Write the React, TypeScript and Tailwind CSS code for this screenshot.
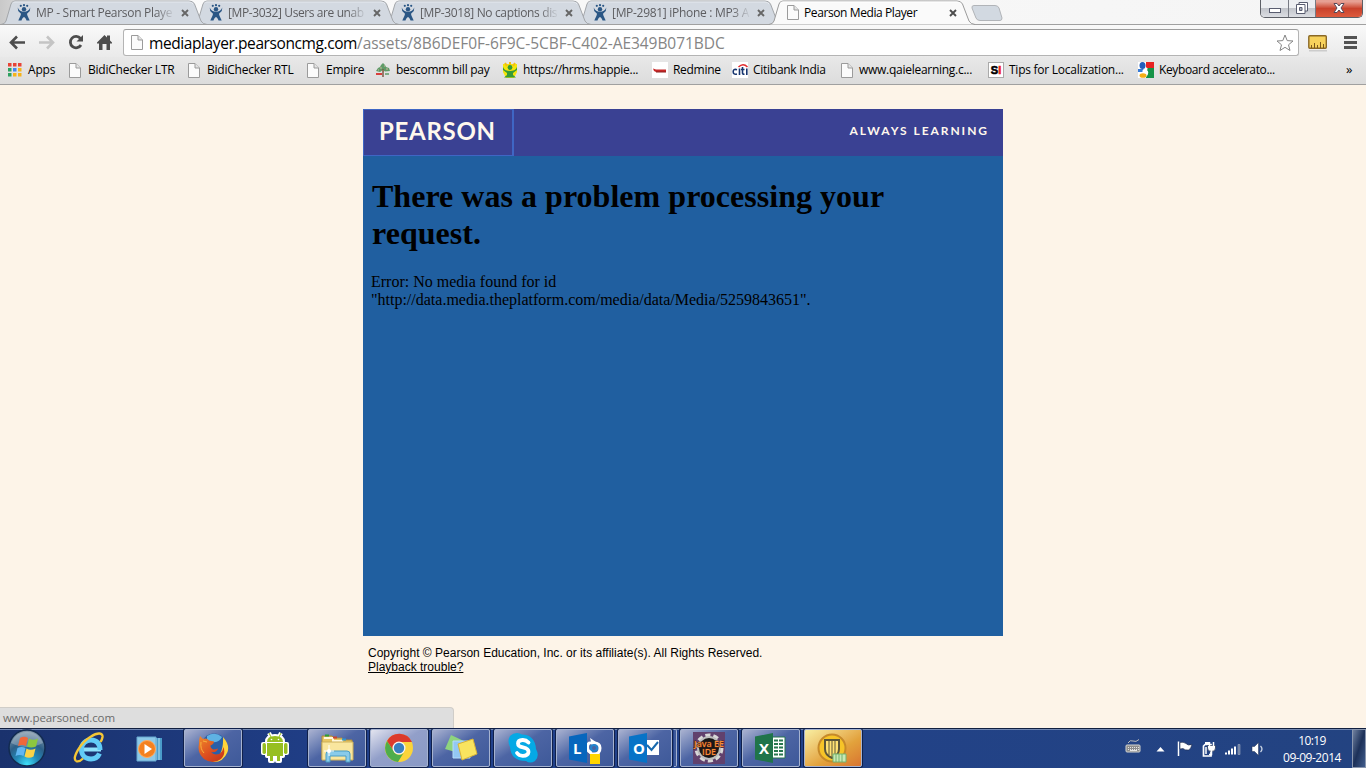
import React from "react";

const ui = "font-['Open_Sans','Noto_Sans',sans-serif]";

function PageIcon({ className = "" }: { className?: string }) {
  return (
    <svg viewBox="0 0 12 15" className={`h-[15px] w-[12px] shrink-0 ${className}`}>
      <path d="M.5.5H7L11.500 5V14.500H.5Z" fill="#fbfbfb" stroke="#9b9b9b" />
      <path d="M7 .5V5H11.500" fill="#e4e4e4" stroke="#9b9b9b" />
    </svg>
  );
}

function JiraIcon() {
  return (
    <svg viewBox="0 0 14 17" className="h-[17px] w-[14px] shrink-0">
      <g fill="#2b5785">
        <circle cx="3.800" cy="1.800" r="1.100" />
        <circle cx="10.200" cy="1.800" r="1.100" />
        <circle cx="7" cy="1.200" r="1.100" />
        <circle cx="7" cy="5.200" r="2.200" />
        <path d="M.7 3.500C2 6.500 4 7.500 7 7.800C10 7.500 12 6.500 13.300 3.500L12.800 7L10 9.800C10.200 12 11.500 13.500 12.700 16.500H9.500C9 14.500 8 13.500 7 13C6 13.500 5 14.500 4.500 16.500H1.300C2.500 13.500 3.800 12 4 9.800L1.200 7Z" />
      </g>
    </svg>
  );
}

function CloseX({ dark }: { dark?: boolean }) {
  return (
    <svg viewBox="0 0 8 8" className="h-[8px] w-[8px] shrink-0">
      <path d="M1 1L7 7M7 1L1 7" stroke={dark ? "#4d4d4d" : "#666"} strokeWidth="1.900" />
    </svg>
  );
}

function Tab({ label, active, z, textClass }: { label: string; active?: boolean; z: string; textClass: string }) {
  return (
    <div className={`relative h-[25px] w-[192px] shrink-0 ${z}`}>
      <svg viewBox="0 0 208 25" className="absolute left-0 top-0 h-[25px] w-[208px]">
        <path
          d="M1 24.500Q5 24 6 21L11 4Q12 1 15 1H189Q193 1 194.500 4L201 21Q202.500 24 207 24.500"
          fill={active ? "#fafafa" : "#d3d9e1"}
          stroke={active ? "#9b9b9b" : "#a3a6aa"}
        />
        <path d="M12.500 3Q13 2 15 2H189Q192 2 193 4" fill="none" stroke={active ? "#fff" : "#e6eaef"} />
        {!active && <path d="M0 24.500H208" stroke="#a0a0a0" />}
      </svg>
      <div className="relative flex h-[25px] items-center pl-[17px]">
        {active ? <PageIcon className="ml-[2px] mr-[5px]" /> : <div className="mr-[5px] flex"><JiraIcon /></div>}
        <div
          className={`w-[139px] overflow-hidden whitespace-nowrap text-[12px] leading-[20px] ${textClass} ${
            active ? "text-black" : "text-[#5d5d60] [mask-image:linear-gradient(to_right,#000_86%,transparent_100%)]"
          }`}
        >
          {label}
        </div>
        <div className="ml-[6px] flex"><CloseX dark={active} /></div>
      </div>
    </div>
  );
}

function WindowButtons() {
  return (
    <div className="relative z-20 ml-auto mr-[3px] flex h-[18px] overflow-hidden rounded-b-[5px] border border-t-0 border-[#5c5f66]">
      <div className="flex w-[28px] items-center justify-center border-r border-[#777a83] bg-linear-to-b from-[#eceef1] from-45% via-[#c2c5cb] via-50% to-[#dcdee3]">
        <svg viewBox="0 0 12 5" className="mt-[4px] h-[5px] w-[12px]"><rect x=".5" y=".5" width="11" height="4" fill="#fff" stroke="#595d70" /></svg>
      </div>
      <div className="flex w-[27px] items-center justify-center border-r border-[#777a83] bg-linear-to-b from-[#eceef1] from-45% via-[#c2c5cb] via-50% to-[#dcdee3]">
        <svg viewBox="0 0 12 12" className="-mt-[2px] h-[12px] w-[12px]" fill="#fff" stroke="#595d70">
          <path d="M3 .5H11.500V9H3Z" /><path d="M.5 2.500H9V11.500H.5Z" /><path d="M3.500 5.500H6V8.500H3.500Z" fill="#aeb3bf" />
        </svg>
      </div>
      <div className="flex w-[46px] items-center justify-center bg-linear-to-b from-[#e6a093] from-10% via-[#c9422c] via-50% to-[#dd5a3d]">
        <svg viewBox="0 0 12 10" className="-mt-[2px] h-[10px] w-[12px]">
          <path d="M1 .5H4L6 3L8 .5H11L8 5L11 9.500H8L6 7L4 9.500H1L4 5Z" fill="#fff" stroke="#574a5a" />
        </svg>
      </div>
    </div>
  );
}

function Toolbar() {
  return (
    <div className="flex h-[32px] items-center bg-linear-to-b from-[#f9f9f9] to-[#eaeaea]">
      <svg viewBox="0 0 120 32" className="h-[32px] w-[120px] shrink-0" fill="none">
        <path d="M11 17.500H25M17 11.500L11 17.500L17 23.500" stroke="#4d4d4d" strokeWidth="2.600" />
        <path d="M39 17.500H53M47 11.500L53 17.500L47 23.500" stroke="#c4c4c4" strokeWidth="2.600" />
        <path d="M80.500 13.500A5.700 5.700 0 1 0 81 20" stroke="#4d4d4d" strokeWidth="2.800" />
        <path d="M83 10V16.500H76.500Z" fill="#4d4d4d" />
        <path d="M97 17.500L104.500 10L107 12.500V10.500H110V15.500L112 17.500V18.500H110V25H106.500V19H102.500V25H99V18.500H97Z" fill="#4d4d4d" />
      </svg>
      <div className="ml-[3px] mt-[3px] flex h-[27px] w-[1176px] items-center rounded-[3px] border border-[#b4b4b4] border-t-[#9c9c9c] bg-white pl-[7px]">
        <PageIcon />
        <div className="ml-[6px] w-[1133px] whitespace-nowrap text-[15.500px] leading-[22px] tracking-[-0.050px] text-[#858585]">
          <span className="tracking-[-0.410px] text-black">mediaplayer.pearsoncmg.com</span>/assets/8B6DEF0F-6F9C-5CBF-C402-AE349B071BDC
        </div>
        <svg viewBox="0 0 18 18" className="-ml-[6px] h-[18px] w-[18px] shrink-0">
          <path d="M9 1L11.200 6.600L17 7L12.500 10.800L14 16.500L9 13.300L4 16.500L5.500 10.800L1 7L6.800 6.600Z" fill="#fff" stroke="#858585" strokeLinejoin="round" />
        </svg>
      </div>
      <svg viewBox="0 0 66 32" className="ml-[1px] h-[32px] w-[66px] shrink-0">
        <rect x="9" y="25" width="18" height="1.500" fill="#ccc" />
        <rect x="8.800" y="10.800" width="17.500" height="12.500" rx="1" fill="#f7d25c" stroke="#8a6826" strokeWidth="1.400" />
        <path d="M11.500 23V20M14.500 23V18M17.500 23V20M20.500 23V17M23.500 23V19" stroke="#7b591c" />
        <path d="M44 12.500H57M44 17.500H57M44 22.500H57" stroke="#535353" strokeWidth="3" />
      </svg>
    </div>
  );
}

const appColors = ["#e84436", "#e84436", "#e84436", "#2da160", "#4385f0", "#f6b31a", "#2da160", "#f6b31a", "#f6b31a"];

const AppsIcon = () => (
  <svg viewBox="0 0 14 14" className="h-[14px] w-[14px]">
    {appColors.map((c, i) => <rect key={i} x={(i % 3) * 5} y={Math.floor(i / 3) * 5} width="3.500" height="3.500" fill={c} />)}
  </svg>
);
const TreeIcon = () => (
  <svg viewBox="0 0 16 16" className="h-[16px] w-[16px]">
    <path d="M8 1L10 3L11 5L14 6L15 9L10 9.500L8 8L5 10L1 9L3 6L5 5L6 3Z" fill="#5f9b68" />
    <path d="M5 6H7M9 4H10M11 7H13M3 8H4M7 8L9 10" stroke="#d4b39a" />
    <path d="M8 7V15" stroke="#7c5a45" strokeWidth="1.500" /><path d="M1 12H7" stroke="#d8403c" strokeWidth="2" /><path d="M10 12H14" stroke="#5f9b68" strokeWidth="1.500" />
  </svg>
);
const HrmsIcon = () => (
  <svg viewBox="0 0 16 16" className="h-[16px] w-[16px]">
    <path d="M1 2H15V10L12 16H4L1 10Z" fill="#f4e60a" />
    <path d="M8 0V3M3 1L5 4M13 1L11 4" stroke="#f2bf14" strokeWidth="2" />
    <circle cx="8" cy="5.500" r="2.400" fill="#359b38" />
    <path d="M1 5C2 8 5 9 8 9C11 9 14 8 15 5V8L11 11V13L14 15.500H2L5 13V11L1 8Z" fill="#359b38" />
  </svg>
);
const RedmineIcon = () => (
  <svg viewBox="0 0 16 16" className="h-[16px] w-[16px]">
    <path d="M0 0H16V16H0Z" fill="#fff" /><path d="M1 6.500L4 7.500H14V10H4L2 9Z" fill="#c82828" /><path d="M4 10H14" stroke="#8e2020" />
  </svg>
);
const CitiIcon = () => (
  <svg viewBox="0 0 16 16" className="h-[16px] w-[16px]">
    <path d="M0 0H16V16H0Z" fill="#fff" />
    <path d="M6.500 5Q11 .5 15.500 5" fill="none" stroke="#e22a2c" strokeWidth="1.500" />
    <path d="M5 7.700Q1.200 6.500 1.200 9.700T5 12M7.500 6.500V13M10.500 5V11Q10.500 12.300 12.500 12.200M9 7.500H12.500M14.800 6.500V13" fill="none" stroke="#17356f" strokeWidth="1.600" />
  </svg>
);
const SiIcon = () => (
  <div className="flex h-[16px] w-[16px] items-center justify-center border border-[#aaa] bg-white font-['Liberation_Sans',sans-serif] text-[11px] font-bold leading-none text-black [-webkit-text-stroke:0.6px]">
    S<span className="text-[#ef1d1d]">I</span>
  </div>
);
const GoogleIcon = () => (
  <svg viewBox="0 0 16 16" className="h-[16px] w-[16px]">
    <path d="M0 0H16V16H0Z" fill="#fff" /><path d="M8 0H16V6H8Z" fill="#e72323" /><path d="M9 6H16V16H8Z" fill="#159347" /><path d="M0 7H6V10H0Z" fill="#357bd8" />
    <path d="M7 5Q11 6 9 8Q12 11 8 15Q5 17 2 14" fill="#fff" />
    <ellipse cx="4.500" cy="3.500" rx="3" ry="3.500" fill="#225ebd" /><ellipse cx="5" cy="13.500" rx="3.500" ry="2.300" fill="#f5ae14" /><path d="M5 8L8 11" stroke="#fff" strokeWidth="2" />
  </svg>
);

const bookmarks: { label: string; w: string; gap: string; t: string; icon: React.ReactNode }[] = [
  { label: "Apps", w: "w-[61px]", gap: "gap-[6px]", t: "tracking-[-0.200px]", icon: <AppsIcon /> },
  { label: "BidiChecker LTR", w: "w-[119px]", gap: "gap-[7px]", t: "tracking-[-0.230px]", icon: <PageIcon /> },
  { label: "BidiChecker RTL", w: "w-[119px]", gap: "gap-[7px]", t: "tracking-[-0.230px]", icon: <PageIcon /> },
  { label: "Empire", w: "w-[68px]", gap: "gap-[7px]", t: "tracking-[-0.260px]", icon: <PageIcon /> },
  { label: "bescomm bill pay", w: "w-[127px]", gap: "gap-[5px]", t: "tracking-[-0.260px]", icon: <TreeIcon /> },
  { label: "https://hrms.happie...", w: "w-[150px]", gap: "gap-[5px]", t: "tracking-[-0.270px]", icon: <HrmsIcon /> },
  { label: "Redmine", w: "w-[80px]", gap: "gap-[5px]", t: "tracking-[-0.300px]", icon: <RedmineIcon /> },
  { label: "Citibank India", w: "w-[109px]", gap: "gap-[5px]", t: "tracking-[-0.270px]", icon: <CitiIcon /> },
  { label: "www.qaielearning.c...", w: "w-[147px]", gap: "gap-[6px]", t: "tracking-[-0.270px]", icon: <PageIcon /> },
  { label: "Tips for Localization...", w: "w-[150px]", gap: "gap-[5px]", t: "tracking-[-0.250px]", icon: <SiIcon /> },
  { label: "Keyboard accelerato...", w: "w-[208px]", gap: "gap-[5px]", t: "tracking-[-0.370px]", icon: <GoogleIcon /> },
];

const StartIcon = () => (
  <svg viewBox="0 0 38 38" className="h-[38px] w-[38px]">
    <defs>
      <radialGradient id="orb" cx=".5" cy=".95" r=".9"><stop offset="0" stopColor="#3fe0fa" /><stop offset=".35" stopColor="#2389b8" /><stop offset=".65" stopColor="#2c5f88" /><stop offset="1" stopColor="#7c92a5" /></radialGradient>
    </defs>
    <circle cx="19" cy="19" r="18" fill="url(#orb)" stroke="#122b50" strokeWidth="1.500" />
    <path d="M3 14A17 17 0 0 1 35 14Q19 22 3 14" fill="#fff" opacity=".25" />
    <path d="M12 9Q16 6.500 20 9L18 17Q14 15 10 17Z" fill="#f0673a" /><path d="M21 9.500Q25 12 30 9.500L28 17.500Q23 19.500 19 17.500Z" fill="#8dc83f" />
    <path d="M9.500 19Q13.500 17 17.500 19L15.500 27Q11.500 25 7.500 27Z" fill="#61b6f2" /><path d="M18.500 19.500Q22.500 22 27.500 19.500L25.500 27.500Q21 30 16.500 27.500Z" fill="#fbd348" />
  </svg>
);
const IeIcon = () => (
  <svg viewBox="0 0 32 32" className="h-[32px] w-[32px]" fill="none">
    <path d="M10 17.500H28" stroke="#8ee0fb" strokeWidth="4" />
    <path d="M26.500 21.500C24.500 26 21.500 27 18 27C12 27 8.500 23 8.500 17.500C8.500 11.500 13 8 18 8C24 8 27 12 27 18" stroke="#62cbf7" strokeWidth="5" />
    <path d="M3 29C-1 26 7 11 18 4.500C25 0 30 1 29.500 5C29 8 28 9 27.500 10" stroke="#f5c636" strokeWidth="2.400" />
    <path d="M3 29C5 30 8 28.500 10 26.500" stroke="#f5c636" strokeWidth="2.400" />
  </svg>
);
const MediaIcon = () => (
  <svg viewBox="0 0 28 28" className="h-[28px] w-[28px]">
    <path d="M10 3H26V25H10Z" fill="#4a9cca" /><path d="M23 3V25M20 3V25" stroke="#b6e3f6" /><path d="M1 2H20V26H1Z" fill="#8dc9e8" stroke="#68a9d0" />
    <circle cx="11" cy="14" r="8.500" fill="#f48120" stroke="#ffac61" /><path d="M8.500 9L16 14L8.500 19Z" fill="#fff" />
  </svg>
);
const FirefoxIcon = () => (
  <svg viewBox="0 0 32 32" className="h-[32px] w-[32px]">
    <defs><linearGradient id="fox" x1="0" y1="0" x2=".8" y2="1"><stop offset="0" stopColor="#f08a2a" /><stop offset=".6" stopColor="#dc4e20" /><stop offset="1" stopColor="#c5381b" /></linearGradient></defs>
    <circle cx="17" cy="14" r="12.500" fill="#2a5fa8" /><path d="M10 4Q18 -1 25 5Q22 11 16 10L10 8Z" fill="#5fb2e3" />
    <path d="M26 5Q33 13 30.500 20Q26 31 15 30Q27 24 26 5Z" fill="#ffd43a" />
    <path d="M3 4L6 7Q10 5.500 12 8.500L17 9.500Q17 12 13.500 13.500Q13 16 16 17.500Q19 17.500 21 16.500Q20 21 14 20Q17 24 23 21.500Q26 19 26.500 15Q29 22 24 27Q16 33 7 27Q0 21 2 12Q2 7 3 4Z" fill="url(#fox)" />
    <path d="M4 10Q3 17 7 21M6 9L10 10" stroke="#f9b13b" fill="none" />
  </svg>
);
const AndroidIcon = () => (
  <svg viewBox="0 0 30 34" className="h-[34px] w-[30px]">
    <g stroke="#fff" strokeWidth="4" strokeLinejoin="round" fill="#fff">
      <path d="M7 11Q7 5 15 5T23 11ZM7 12H23V25H7ZM3 13H5V22H3ZM25 13H27V22H25ZM10 25H13V30H10ZM17 25H20V30H17ZM9 2L11 6M21 2L19 6" />
    </g>
    <g fill="#97bf20"><path d="M7 11Q7 5 15 5T23 11ZM7 12H23V25H7ZM10 25H13V30H10ZM17 25H20V30H17Z" /><rect x="2.500" y="12" width="3.500" height="11" rx="1.700" /><rect x="24" y="12" width="3.500" height="11" rx="1.700" /></g>
    <path d="M9 2L11 6M21 2L19 6" stroke="#97bf20" /><circle cx="11.500" cy="8.500" r=".8" fill="#fff" /><circle cx="18.500" cy="8.500" r=".8" fill="#fff" />
  </svg>
);
const FolderIcon = () => (
  <svg viewBox="0 0 34 32" className="h-[32px] w-[34px]">
    <path d="M2 4H12L14 6H22L24 8H32V27H2Z" fill="#e8c663" stroke="#a8883c" /><path d="M4 6H13V9H22V11H31" stroke="#fff7db" strokeWidth="2" fill="none" />
    <path d="M5 3.500H9" stroke="#2b9f35" strokeWidth="2" /><path d="M13 5.500H17" stroke="#cf442b" strokeWidth="2" /><path d="M22 7.500H26" stroke="#2d97d3" strokeWidth="2" />
    <path d="M2 10H33V28H2Z" fill="#f9e69e" stroke="#cdb05a" /><path d="M6 30V22Q6 19 9 19H27Q30 19 30 22V30H26V24H10V30Z" fill="#89cbea" stroke="#4a9dc4" />
    <path d="M9 13V24M4 19H14" stroke="#fff" /><circle cx="9" cy="19" r="2" fill="#fff" />
  </svg>
);
const ChromeIcon = () => (
  <svg viewBox="0 0 30 30" className="h-[30px] w-[30px]">
    <circle cx="15" cy="15" r="14" fill="#fbd43a" /><path d="M3 8A14 14 0 0 1 28 9H15A6 6 0 0 0 9.500 18Z" fill="#dc3a2c" /><path d="M3 8A14 14 0 0 0 14 29L20.500 18.500A6 6 0 0 1 9.500 18Z" fill="#4fad4b" />
    <circle cx="15" cy="15" r="6.500" fill="#f5f5f5" /><circle cx="15" cy="15" r="5.200" fill="#397fc0" />
  </svg>
);
const NotesIcon = () => (
  <svg viewBox="0 0 34 30" className="h-[30px] w-[34px]">
    <path d="M7 2L22 9L15 20L1 16Z" fill="#8ed47e" /><path d="M9 8H26V25H9Z" fill="#93c8f4" stroke="#b5ddfa" /><path d="M14 11L29 6L33 21L18 27Z" fill="#f9e45f" stroke="#d9b336" />
  </svg>
);
const SkypeIcon = () => (
  <svg viewBox="0 0 32 32" className="h-[32px] w-[32px]">
    <path d="M10 1Q13 1 15 2.500Q28 3 29 17Q33 24 28 29Q23 32 19 29Q4 29 3 15Q0 9 3 4Q6 1 10 1Z" fill="#05a9e5" />
    <path d="M21.500 10.500Q19 7.800 15.500 8Q11 8.300 11 11.500Q11 14.500 16 15.300Q21.700 16.500 21.500 20Q21 24 15.500 23.800Q12 23.800 10 21" fill="none" stroke="#fff" strokeWidth="3.800" strokeLinecap="round" />
  </svg>
);
const OfficeIcon = ({ letter, color, children }: { letter: string; color: string; children?: React.ReactNode }) => (
  <svg viewBox="0 0 34 32" className="h-[32px] w-[34px]">
    {children}
    <path d="M1 4.500L19 1V31L1 27.500Z" fill={color} />
    <text x="5" y="21.500" fill="#fff" fontFamily="Open Sans" fontSize="15" fontWeight="700">{letter}</text>
  </svg>
);
const JavaIcon = () => (
  <svg viewBox="0 0 32 32" className="h-[32px] w-[32px]">
    <path d="M0 0H32V32H0Z" fill="#61416d" />
    <circle cx="16" cy="16" r="12.500" fill="none" stroke="#d8d8d8" strokeWidth="4" strokeDasharray="5 2.850" />
    <circle cx="16" cy="16" r="11" fill="#181717" stroke="#bdbdbd" strokeWidth="2" />
    <g fill="#f98a35" fontFamily="Open Sans" fontSize="8.500" fontWeight="600" stroke="#4a2418" strokeWidth="1" paintOrder="stroke">
      <text x="1" y="14.500" textLength="30" lengthAdjust="spacingAndGlyphs">Java EE</text>
      <text x="9" y="23" textLength="14" lengthAdjust="spacingAndGlyphs">IDE</text>
    </g>
  </svg>
);
const ShieldIcon = () => (
  <svg viewBox="0 0 32 32" className="h-[32px] w-[32px]">
    <circle cx="15" cy="16" r="13.500" fill="#f7c428" stroke="#c6892a" strokeWidth="2" />
    <path d="M8 8H22V17Q22 23 15 26Q8 23 8 17Z" fill="#ffe273" stroke="#5c5638" strokeWidth="2" /><path d="M12 8V23M15 8V25M18 8V23" stroke="#5c5638" />
    <path d="M16 22H29V30H16Z" fill="#c8e8b5" stroke="#75b26d" /><path d="M19 22V30M22 22V30M25 22V30" stroke="#75b26d" />
  </svg>
);

const framed =
  "mx-px h-[38px] w-[58px] rounded-[2px] border border-[#a6b3d0] bg-linear-to-br shadow-[0_0_0_1px_#10204b] flex items-center justify-center";
const normal = "from-[#aab2d0] via-[#4d65a4] via-45% to-[#3e5999]";

const taskButtons: { icon: React.ReactNode; look: string; stacked?: boolean }[] = [
  { icon: <FirefoxIcon />, look: normal },
  { icon: <AndroidIcon />, look: "" },
  { icon: <FolderIcon />, look: normal },
  { icon: <ChromeIcon />, look: "from-[#e3e4ef] via-[#929fc9] via-45% to-[#8999c5]" },
  { icon: <NotesIcon />, look: normal },
  { icon: <SkypeIcon />, look: normal },
  {
    icon: (
      <OfficeIcon letter="L" color="#0766bd">
        <path d="M18 15Q18 9 23 9.500L22 6L28 10L23.500 14.500V12Q21 12 21 15Q21 19 24 19V22Q18 22 18 15Z" fill="#fff" />
        <path d="M26 11Q32 11 32 16Q32 22 26 22Q22 22 21 18" fill="none" stroke="#fff" strokeWidth="3" /><circle cx="26" cy="16" r="3" fill="none" stroke="#2384ce" strokeWidth="2" />
        <path d="M22 22H32V32H22Z" fill="#ffd500" />
      </OfficeIcon>
    ),
    look: normal,
  },
  {
    icon: (
      <OfficeIcon letter="O" color="#0773c7"><path d="M18 8H31V23H18Z" fill="#fff" /><path d="M19 13L23.500 18L30 10" fill="none" stroke="#1768ad" strokeWidth="2" /></OfficeIcon>
    ),
    look: normal,
    stacked: true,
  },
  { icon: <JavaIcon />, look: normal },
  {
    icon: (
      <OfficeIcon letter="X" color="#20744a"><path d="M18 5H31V26H18Z" fill="#fff" stroke="#26774e" /><path d="M20 8.500H29M20 12H29M20 15.500H29M20 19H29M20 22.500H29" stroke="#26774e" strokeWidth="1.800" /><path d="M24.500 6V25" stroke="#fff" /></OfficeIcon>
    ),
    look: normal,
  },
  { icon: <ShieldIcon />, look: "from-[#f8efa2] via-[#e2a23c] via-60% to-[#d87431]" },
];

function TrayIcons() {
  return (
    <svg viewBox="0 0 151 39" className="h-[39px] w-[151px] shrink-0">
      <rect x="5" y="16" width="14" height="7" rx="1" fill="#8c8c8c" stroke="#d3d3cf" />
      <path d="M7 18.500H18M7 20.500H18" stroke="#e5e5e5" strokeDasharray="1 1" /><path d="M9 21.500H16" stroke="#e5e5e5" />
      <path d="M7 14Q9 10.500 12 12T18 10.500" stroke="#bbb" fill="none" />
      <path d="M35.500 22.500H43.500L39.500 18Z" fill="#fff" />
      <path d="M57.500 12.500V27" stroke="#fff" strokeWidth="1.500" /><path d="M59 13.500Q62 12.500 65 14.500Q67 17 71 15.500Q70 19 68 21Q64 21.500 62 19.500L59 20Z" fill="#fff" stroke="#1e2c4c" strokeWidth=".6" />
      <path d="M84 15.500H90V27H82.500V17Z" fill="none" stroke="#fff" strokeWidth="1.700" /><path d="M84 13H88V15H84Z" fill="#fff" /><path d="M85 18V25" stroke="#fff" strokeWidth="1.500" />
      <path d="M86.500 16.500H94.500V19Q94.500 22.500 90.500 22.500T86.500 19Z" fill="#fff" stroke="#1e2c4c" strokeWidth=".7" /><path d="M88.500 13V17M92.500 13V17M90.500 22V25.500H88" stroke="#fff" strokeWidth="1.500" fill="none" />
      <path d="M105 25.500V23.500M108 25.500V21.500M111 25.500V19.500M114 25.500V17.500" stroke="#fff" strokeWidth="2" /><path d="M117 25.500V15.500H119V25.500Z" fill="#65799f" stroke="#9daac1" strokeWidth=".6" />
      <path d="M131 17.500H133.500L137.500 13.500V26.500L133.500 22.500H131Z" fill="#fff" stroke="#1e2c4c" strokeWidth=".5" /><path d="M139.500 17Q142.500 20 139.500 23" stroke="#ccd6e5" fill="none" strokeWidth="1.300" />
    </svg>
  );
}

function Taskbar() {
  return (
    <div className="flex h-[40px] items-start border-t border-[#111f3f] bg-linear-to-r from-[#1a326d] from-0% via-[#21418d] via-30% to-[#234381] shadow-[inset_0_1px_0_#7187b2]">
      <div className="ml-[8px] flex w-[52px] shrink-0"><StartIcon /></div>
      <div className="flex h-[39px] w-[62px] shrink-0 items-center pl-[13px] pb-px"><IeIcon /></div>
      <div className="flex h-[39px] w-[61px] shrink-0 items-center pl-[14px]"><MediaIcon /></div>
      {taskButtons.map((b, i) => (
        <div key={i} className="flex w-[62px] shrink-0 pr-[2px]">
          {b.stacked ? (
            <>
              <div className={`mx-px flex h-[38px] w-[54px] items-center justify-center rounded-[2px] border border-[#a6b3d0] bg-linear-to-br shadow-[0_0_0_1px_#10204b] ${b.look}`}>{b.icon}</div>
              <div className="ml-px h-[38px] w-[3px] rounded-r-[2px] border border-l-0 border-[#a6b3d0] bg-[#3e5999]" />
            </>
          ) : (
            <div className={b.look ? `${framed} ${b.look}` : "flex h-[38px] w-[60px] items-center justify-center"}>{b.icon}</div>
          )}
        </div>
      ))}
      <div className="flex-1" />
      <TrayIcons />
      <div className="flex h-[39px] w-[80px] flex-col items-center pt-[3px] text-[12px] leading-[17px] text-white">
        <span className="tracking-[-0.600px]">10:19</span>
        <span className="tracking-[-0.480px]">09-09-2014</span>
      </div>
      <div className="h-[39px] w-[14px] border border-[#8996ae] bg-linear-to-br from-[#71819f] via-[#1d3159] to-[#415d8d]" />
    </div>
  );
}

export default function App() {
  return (
    <div className={`flex h-[768px] w-[1366px] flex-col overflow-hidden bg-[#fdf4e8] ${ui}`}>
      <div className="relative flex h-[25px] border-b border-[#a0a0a0] bg-linear-to-r from-[#c9c9c9] from-0% via-[#fafafa] via-5% to-[#f5f5f5]">
        <Tab label="MP - Smart Pearson Playe" z="z-[5]" textClass="tracking-[-0.300px]" />
        <Tab label="[MP-3032] Users are unab" z="z-[4]" textClass="tracking-[-0.400px]" />
        <Tab label="[MP-3018] No captions dis" z="z-[3]" textClass="tracking-[-0.360px]" />
        <Tab label="[MP-2981] iPhone : MP3 A" z="z-[2]" textClass="tracking-[-0.300px]" />
        <Tab label="Pearson Media Player" active z="z-[6]" textClass="tracking-[-0.400px]" />
        <svg viewBox="0 0 32 17" className="ml-[11px] mt-[5px] h-[17px] w-[32px]">
          <path d="M3 .5H24Q27 .5 28 3L31 13Q31 15.500 29 15.500H9Q6 15.500 5 13L1 3Q.5.5 3 .5Z" fill="#d2d9e1" stroke="#b1b4b8" />
        </svg>
        <WindowButtons />
      </div>
      <Toolbar />
      <div className="flex h-[28px] items-center border-b border-[#a0a0a0] bg-linear-to-b from-[#e8e8e8] to-[#dcdcdc] pl-[8px] text-[12px] text-black">
        {bookmarks.map((b) => (
          <div key={b.label} className={`flex shrink-0 items-center pb-px ${b.w} ${b.gap}`}>
            {b.icon}
            <span className={`whitespace-nowrap pb-px leading-[18px] ${b.t}`}>{b.label}</span>
          </div>
        ))}
        <span className="pb-[3px] text-[13px] leading-[18px]">»</span>
      </div>
      <main className="flex flex-1 flex-col pt-[24px]">
        <section className="mx-auto h-[527px] w-[640px] bg-[#205fa0]">
          <header className="flex h-[47px] justify-between bg-[#3a4193] font-['Lato',sans-serif] text-[#fff8ed]">
            <div className="w-[151px] border border-r-2 border-[#3f66c4] pl-[15px] text-[24px] font-bold leading-[42px] tracking-[0.700px]">PEARSON</div>
            <div className="pr-[14px] text-[12px] font-bold leading-[43px] tracking-[1.950px]">ALWAYS LEARNING</div>
          </header>
          <div className="px-[8px] pt-[22px] font-['Liberation_Serif',serif] text-black">
            <h1 className="pl-px text-[32px] font-bold leading-[37px] tracking-[0.030px]">There was a problem processing your<br />request.</h1>
            <p className="mt-[21px] text-[16px] leading-[18px]">Error: No media found for id<br />"http://data.media.theplatform.com/media/data/Media/5259843651".</p>
          </div>
        </section>
        <footer className="ml-[368px] mt-[10px] font-['Liberation_Sans',sans-serif] text-[12px] leading-[14px] text-black">
          <p className="tracking-[0.013px]">Copyright © Pearson Education, Inc. or its affiliate(s). All Rights Reserved.</p>
          <p className="underline">Playback trouble?</p>
        </footer>
        <div className="mt-auto h-[21px] w-[454px] rounded-tr-[4px] border-r border-t border-[#d0cdc8] bg-[#dedede] pl-[3px] text-[11.500px] leading-[20px] tracking-[-0.080px] text-[#6b6b6b]">www.pearsoned.com</div>
      </main>
      <Taskbar />
    </div>
  );
}
